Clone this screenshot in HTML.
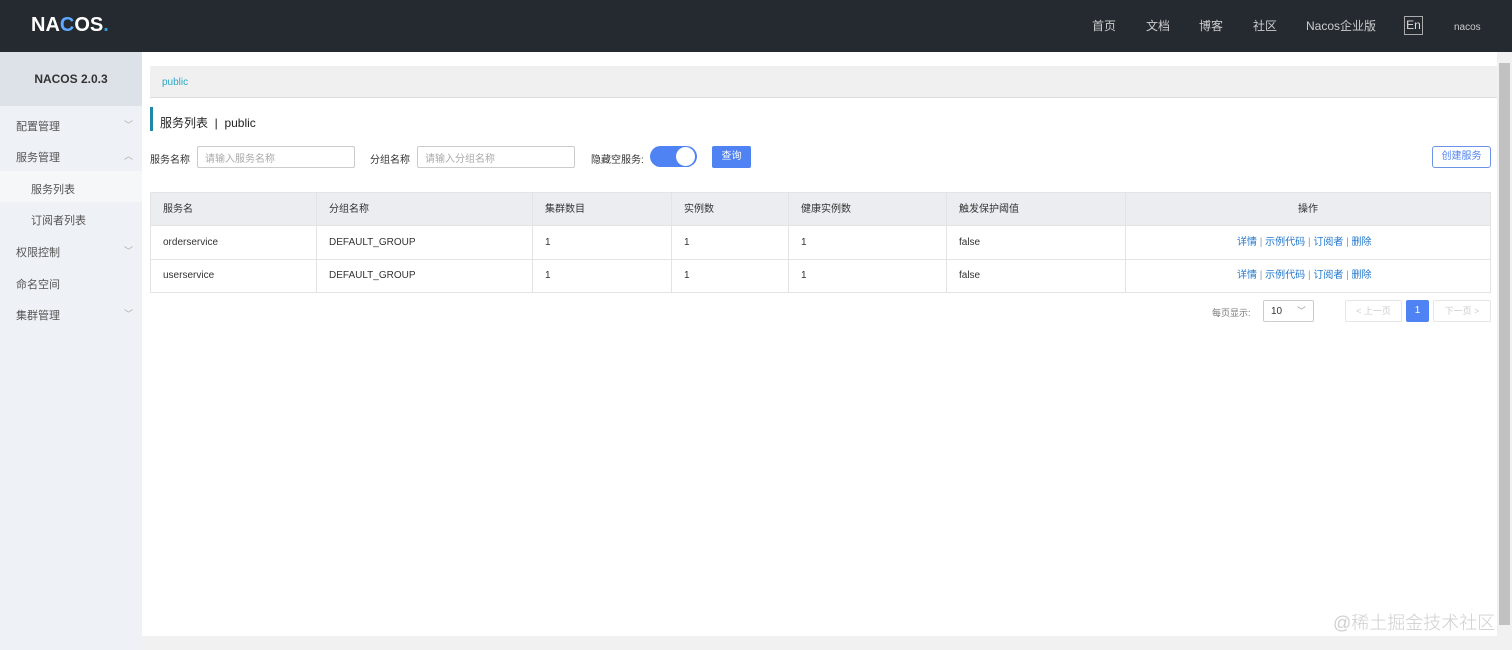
<!DOCTYPE html>
<html><head><meta charset="utf-8"><style>
*{margin:0;padding:0;box-sizing:border-box}
body{width:1512px;height:650px;overflow:hidden;position:relative;background:#fff;font-family:"Liberation Sans","Noto Sans CJK SC",sans-serif;font-size:12px;color:#333}
.abs{position:absolute}
#hd{left:0;top:0;width:1512px;height:52px;background:#252a31}
.nav{top:18px;color:#ccc;font-size:12px;line-height:16px}
#sb{left:0;top:52px;width:142px;height:598px;background:#eef1f5}
#sbt{left:0;top:52px;width:142px;height:54px;background:#dde2e8;text-align:center;line-height:54px;font-weight:bold;font-size:12px;color:#333}
.mi{left:16px;font-size:11px;color:#555}
.ar{left:124px;color:#aaa;font-size:9px}
.cell{position:absolute;font-size:11px;line-height:33px;color:#333}
.lnk{color:#2277cc}
.inp{height:22px;border:1px solid #ccc;border-radius:2px;font-size:10px;color:#aaa;padding-left:7px;display:flex;align-items:center}
</style></head><body>
<div id="hd" class="abs"></div>
<div class="abs" style="left:31px;top:14px;color:#fff;font-size:20px;font-weight:bold">NA<span style="color:#5fa8ff">C</span>OS<span style="color:#2ca0e0">.</span></div>
<div class="abs nav" style="left:1092px">首页</div>
<div class="abs nav" style="left:1146px">文档</div>
<div class="abs nav" style="left:1199px">博客</div>
<div class="abs nav" style="left:1253px">社区</div>
<div class="abs nav" style="left:1306px">Nacos企业版</div>
<div class="abs" style="left:1404px;top:16px;width:19px;height:19px;border:1px solid #aaa;color:#ddd;font-size:12px;line-height:17px;text-align:center">En</div>
<div class="abs nav" style="left:1454px;top:20px;font-size:10px">nacos</div>

<div id="sb" class="abs"></div>
<div id="sbt" class="abs">NACOS 2.0.3</div>
<div class="abs mi" style="top:118px">配置管理</div><div class="abs ar" style="top:118px">﹀</div>
<div class="abs mi" style="top:149px">服务管理</div><div class="abs ar" style="top:149px">︿</div>
<div class="abs" style="left:0;top:171px;width:142px;height:31px;background:#f5f7f9"></div>
<div class="abs mi" style="left:31px;top:181px">服务列表</div>
<div class="abs mi" style="left:31px;top:212px">订阅者列表</div>
<div class="abs mi" style="top:244px">权限控制</div><div class="abs ar" style="top:244px">﹀</div>
<div class="abs mi" style="top:276px">命名空间</div>
<div class="abs mi" style="top:307px">集群管理</div><div class="abs ar" style="top:307px">﹀</div>

<div class="abs" style="left:150px;top:66px;width:1347px;height:32px;background:#f0f0f0;border-bottom:1px solid #ddd"></div>
<div class="abs" style="left:162px;top:77px;color:#2aa5c9;font-size:10px">public</div>
<div class="abs" style="left:150px;top:107px;width:3px;height:24px;background:#1f87a8"></div>
<div class="abs" style="left:160px;top:114px;font-size:12px;color:#222">服务列表 &nbsp;|&nbsp; public</div>

<div class="abs" style="left:150px;top:151px;font-size:10px;color:#333">服务名称</div>
<div class="abs inp" style="left:197px;top:146px;width:158px">请输入服务名称</div>
<div class="abs" style="left:370px;top:151px;font-size:10px;color:#333">分组名称</div>
<div class="abs inp" style="left:417px;top:146px;width:158px">请输入分组名称</div>
<div class="abs" style="left:591px;top:151px;font-size:10px;color:#333">隐藏空服务:</div>
<div class="abs" style="left:650px;top:146px;width:47px;height:21px;border-radius:11px;background:#4f82f2"></div>
<div class="abs" style="left:676px;top:147px;width:19px;height:19px;border-radius:50%;background:#fff"></div>
<div class="abs" style="left:712px;top:146px;width:39px;height:22px;background:#4f82f2;border-radius:2px;color:#fff;font-size:10px;text-align:center;line-height:22px">查询</div>
<div class="abs" style="left:1432px;top:146px;width:59px;height:22px;border:1px solid #6b93e8;border-radius:3px;color:#4f82f2;font-size:10px;text-align:center;line-height:20px">创建服务</div>

<div class="abs" style="left:150px;top:192px;width:1341px;height:101px;border:1px solid #e3e3e3"></div>
<div class="abs" style="left:151px;top:193px;width:1339px;height:33px;background:#ebedf0;border-bottom:1px solid #e3e3e3"></div>
<div class="abs" style="left:151px;top:259px;width:1339px;height:1px;background:#e3e3e3"></div>
<div class="abs" style="left:316px;top:193px;width:1px;height:99px;background:#e3e3e3"></div>
<div class="abs" style="left:532px;top:193px;width:1px;height:99px;background:#e3e3e3"></div>
<div class="abs" style="left:671px;top:193px;width:1px;height:99px;background:#e3e3e3"></div>
<div class="abs" style="left:788px;top:193px;width:1px;height:99px;background:#e3e3e3"></div>
<div class="abs" style="left:946px;top:193px;width:1px;height:99px;background:#e3e3e3"></div>
<div class="abs" style="left:1125px;top:193px;width:1px;height:99px;background:#e3e3e3"></div>

<div class="cell" style="left:163px;top:193px;font-size:10px">服务名</div>
<div class="cell" style="left:329px;top:193px;font-size:10px">分组名称</div>
<div class="cell" style="left:545px;top:193px;font-size:10px">集群数目</div>
<div class="cell" style="left:684px;top:193px;font-size:10px">实例数</div>
<div class="cell" style="left:801px;top:193px;font-size:10px">健康实例数</div>
<div class="cell" style="left:959px;top:193px;font-size:10px">触发保护阈值</div>
<div class="cell" style="left:1298px;top:193px;font-size:10px">操作</div>

<div class="cell" style="left:163px;top:226px;font-size:10px">orderservice</div>
<div class="cell" style="left:329px;top:226px;font-size:10px">DEFAULT_GROUP</div>
<div class="cell" style="left:545px;top:226px;font-size:10px">1</div>
<div class="cell" style="left:684px;top:226px;font-size:10px">1</div>
<div class="cell" style="left:801px;top:226px;font-size:10px">1</div>
<div class="cell" style="left:959px;top:226px;font-size:10px">false</div>
<div class="cell lnk" style="left:1237px;top:226px;font-size:10px">详情 <span style="color:#999">|</span> 示例代码 <span style="color:#999">|</span> 订阅者 <span style="color:#999">|</span> 删除</div>

<div class="cell" style="left:163px;top:259px;font-size:10px">userservice</div>
<div class="cell" style="left:329px;top:259px;font-size:10px">DEFAULT_GROUP</div>
<div class="cell" style="left:545px;top:259px;font-size:10px">1</div>
<div class="cell" style="left:684px;top:259px;font-size:10px">1</div>
<div class="cell" style="left:801px;top:259px;font-size:10px">1</div>
<div class="cell" style="left:959px;top:259px;font-size:10px">false</div>
<div class="cell lnk" style="left:1237px;top:259px;font-size:10px">详情 <span style="color:#999">|</span> 示例代码 <span style="color:#999">|</span> 订阅者 <span style="color:#999">|</span> 删除</div>

<div class="abs" style="left:1212px;top:306px;font-size:9px;color:#777">每页显示:</div>
<div class="abs inp" style="left:1263px;top:300px;width:51px;color:#333">10<span style="position:absolute;left:33px;top:3px;color:#999;font-size:9px">﹀</span></div>
<div class="abs" style="left:1345px;top:300px;width:57px;height:22px;border:1px solid #e6e6e6;border-radius:2px;font-size:9px;line-height:20px;text-align:center;color:#ccc">&lt; 上一页</div>
<div class="abs" style="left:1406px;top:300px;width:23px;height:22px;background:#4f82f2;border-radius:2px;color:#fff;font-size:10px;line-height:22px;text-align:center">1</div>
<div class="abs" style="left:1433px;top:300px;width:58px;height:22px;border:1px solid #e6e6e6;border-radius:2px;font-size:9px;line-height:20px;text-align:center;color:#ccc">下一页 &gt;</div>

<div class="abs" style="left:1497px;top:52px;width:15px;height:584px;background:#f1f1f1"></div>
<div class="abs" style="left:1499px;top:63px;width:11px;height:562px;background:#c1c1c1"></div>
<div class="abs" style="left:142px;top:636px;width:1370px;height:14px;background:#f1f1f1"></div>
<div class="abs" style="left:1333px;top:609px;font-size:18px;color:#cfcfcf;font-weight:300">@稀土掘金技术社区</div>
</body></html>
